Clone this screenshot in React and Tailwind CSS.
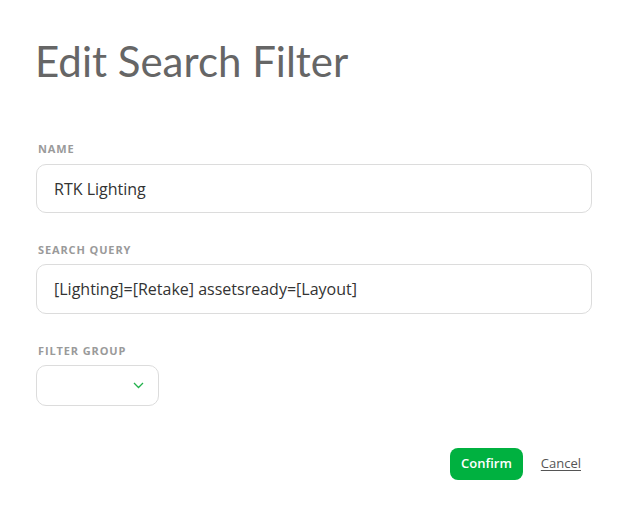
export default function App() {
  const label = "block text-[11px] font-bold tracking-[0.08em] text-[#9a9a9a] uppercase";
  const input = "w-full h-[49px] rounded-[10px] border border-[#dcdcdc] bg-white pl-[17px] text-[16px] text-[#333] flex items-center";
  return (
    <div className="w-[625px] h-[511px] bg-white" style={{ fontFamily: '"Open Sans", sans-serif' }}>
      <div className="pl-[36px] pr-[33px] pt-[35px]">
        <h1 className="text-[42px] leading-[52px] text-[#666] ml-[-1px]" style={{ fontFamily: 'Lato, sans-serif' }}>
          Edit Search Filter
        </h1>
        <div className="mt-[50px]">
          <span className={label + " ml-[2px] leading-[24px]"}>Name</span>
          <div className={input + " mt-[3px]"}>RTK Lighting</div>
        </div>
        <div className="mt-[25px]">
          <span className={label + " ml-[2px] leading-[24px]"}>Search Query</span>
          <div className={input + " mt-[2px] h-[50px]"}>[Lighting]=[Retake] assetsready=[Layout]</div>
        </div>
        <div className="mt-[25px]">
          <span className={label + " ml-[2px] leading-[24px]"}>Filter Group</span>
          <div className="mt-[2px] w-[123px] h-[41px] rounded-[10px] border border-[#dcdcdc] bg-white flex items-center justify-end pr-[14px]">
            <svg width="11" height="7" viewBox="0 0 11 7" fill="none">
              <path d="M1 1l4.5 4.5L10 1" stroke="#22b14c" strokeWidth="1.3" />
            </svg>
          </div>
        </div>
        <div className="mt-[42px] flex items-center justify-end gap-[18px] pr-[11px]">
          <button className="h-[32px] px-[11px] rounded-[8px] bg-[#00b140] text-white text-[13px] font-semibold">
            Confirm
          </button>
          <button className="text-[13px] text-[#555] underline underline-offset-2">Cancel</button>
        </div>
      </div>
    </div>
  );
}
